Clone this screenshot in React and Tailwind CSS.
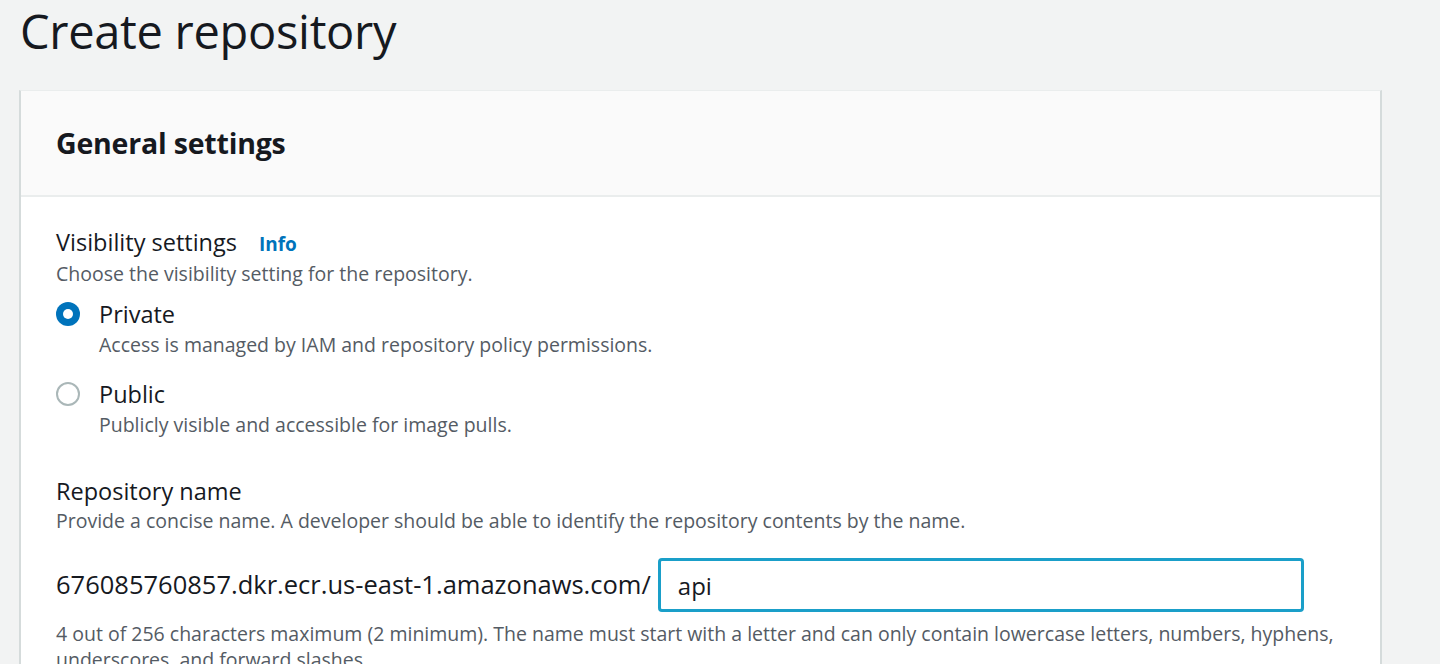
import React, { useState } from 'react';

const font = { fontFamily: '"Open Sans", "Noto Sans", Arial, sans-serif' };

const Radio = ({ checked, onClick }) => (
  <button
    type="button"
    onClick={onClick}
    className={`h-6 w-6 shrink-0 rounded-full flex items-center justify-center ${
      checked ? 'bg-[#0073bb]' : 'border-2 border-[#aab7b8] bg-white'
    }`}
  >
    {checked && <span className="h-2.5 w-2.5 rounded-full bg-white" />}
  </button>
);

const App = () => {
  const [visibility, setVisibility] = useState('private');
  const [name, setName] = useState('api');

  return (
    <div className="min-h-screen bg-[#f2f3f3] text-[#16191f] overflow-hidden" style={font}>
      <h1 className="pl-5 pt-[2px] text-[47px] leading-[58px] font-normal tracking-[-0.3px]">Create repository</h1>

      <div className="ml-[19px] mt-[30px] w-[1363px] bg-white border-x-2 border-t border-x-[#d5dbdb] border-t-[#eaeded]">
        <div className="h-[106px] bg-[#fafafa] border-b-2 border-[#eaeded] flex items-center px-[35px]">
          <h2 className="text-[28.5px] font-bold leading-none tracking-[-0.2px]">General settings</h2>
        </div>

        <div className="px-[35px] pt-[30px]">
          <div className="flex items-baseline gap-[22px] leading-[30px]">
            <span className="text-[23.5px]">Visibility settings</span>
            <a className="text-[19px] font-bold text-[#0073bb]">Info</a>
          </div>
          <p className="text-[19.5px] leading-[30px] text-[#545b64]">Choose the visibility setting for the repository.</p>

          <div className="mt-[10px] flex flex-col gap-[18px]">
            <div className="flex gap-[19px]">
              <div className="pt-[3px]">
                <Radio checked={visibility === 'private'} onClick={() => setVisibility('private')} />
              </div>
              <div>
                <div className="text-[23.5px] leading-[30px]">Private</div>
                <div className="text-[19.5px] leading-[32px] text-[#545b64]">Access is managed by IAM and repository policy permissions.</div>
              </div>
            </div>
            <div className="flex gap-[19px]">
              <div className="pt-[3px]">
                <Radio checked={visibility === 'public'} onClick={() => setVisibility('public')} />
              </div>
              <div>
                <div className="text-[23.5px] leading-[30px]">Public</div>
                <div className="text-[19.5px] leading-[32px] text-[#545b64]">Publicly visible and accessible for image pulls.</div>
              </div>
            </div>
          </div>

          <div className="mt-[35px]">
            <div className="text-[23.5px] leading-[30px]">Repository name</div>
            <p className="text-[19.5px] leading-[30px] text-[#545b64]">
              Provide a concise name. A developer should be able to identify the repository contents by the name.
            </p>
            <div className="mt-[22px] flex items-center gap-[7px]">
              <span className="text-[25.5px] leading-none">676085760857.dkr.ecr.us-east-1.amazonaws.com/</span>
              <input
                autoFocus
                value={name}
                onChange={(e) => setName(e.target.value)}
                className="h-[54px] w-[646px] rounded-[4px] border-[3px] border-[#1a9fc9] px-[17px] text-[24px] outline-none caret-black"
              />
            </div>
            <p className="mt-[9px] text-[19.5px] leading-[26px] text-[#545b64]">
              {name.length + 1} out of 256 characters maximum (2 minimum). The name must start with a letter and can only contain lowercase letters, numbers, hyphens,
              <br />
              underscores, and forward slashes.
            </p>
          </div>
        </div>
      </div>
    </div>
  );
};

export default App;
